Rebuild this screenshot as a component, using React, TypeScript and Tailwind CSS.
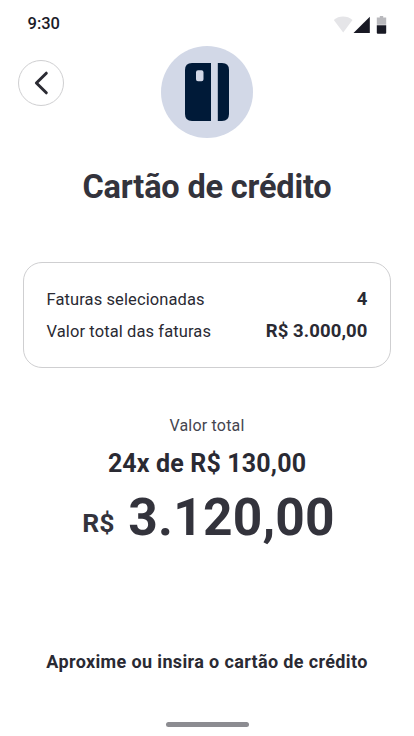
function StatusBar() {
  return (
    <div className="flex h-[46px] items-center justify-between pt-[3px] pr-[27px] pl-[27.5px]">
      <span className="text-[16.5px] font-medium text-[#1b1b28]">9:30</span>
      {/* wifi, signal, battery */}
      <svg width="54" height="20" viewBox="0 0 54 20" className="block">
        <path d="M0.8 5C5.8 0.4 14.3 0.4 19.5 5L10.2 17.6Z" fill="#e5e5e8" />
        <path d="M20.5 18L36.8 1.8V18Z" fill="#181924" />
        <path d="M46.8 1H50.2V2.5H53.2V9.8H43.8V2.5H46.8Z" fill="#b9b9bd" />
        <path d="M43.8 10.2H53.2V17.8Q53.2 18.8 52.2 18.8H44.8Q43.8 18.8 43.8 17.8Z" fill="#181924" />
      </svg>
    </div>
  );
}

function CardBadge() {
  return (
    <div className="grid size-[92px] place-items-center rounded-full bg-[#d2d8e7]">
      <svg width="44" height="58" viewBox="0 0 44 58" className="block">
        <path
          fillRule="evenodd"
          d="M7 0H26V58H7Q0 58 0 51V7Q0 0 7 0ZM13 7.2Q11 7.2 11 9.2V16.2Q11 18.2 13 18.2H16.5Q18.5 18.2 18.5 16.2V9.2Q18.5 7.2 16.5 7.2Z"
          fill="#001a38"
        />
        <path d="M32.8 0H37Q44 0 44 7V51Q44 58 37 58H32.8Z" fill="#001a38" />
      </svg>
    </div>
  );
}

const SUMMARY = [
  { label: "Faturas selecionadas", value: "4" },
  { label: "Valor total das faturas", value: "R$ 3.000,00" },
];

export default function App() {
  return (
    <main className="flex h-[736px] w-[414px] flex-col overflow-hidden bg-white font-['Roboto',sans-serif] whitespace-nowrap text-[#2a2a33]">
      <StatusBar />

      <header className="grid h-[92px] grid-cols-[143px_92px_1fr] pl-[18px]">
        <button
          type="button"
          aria-label="Voltar"
          className="mt-[14px] grid size-[46px] place-items-center rounded-full border border-[#cfcfd1]"
        >
          <svg width="16" height="24" viewBox="0 0 16 24" fill="none" className="block">
            <path
              d="M13.3 2.2L3.4 12L13.3 21.8"
              stroke="#2b2b33"
              strokeWidth="3"
              strokeLinecap="round"
              strokeLinejoin="round"
            />
          </svg>
        </button>
        <CardBadge />
      </header>

      <h1 className="mt-[29px] text-center text-[32.5px] leading-10 font-bold tracking-[-0.18px] text-[#33333c]">
        Cartão de crédito
      </h1>

      <section className="mx-[23px] mt-[55px] flex h-[106px] flex-col justify-center rounded-[19px] border border-[#cfcfd1] px-[22.5px]">
        {SUMMARY.map((row) => (
          <div key={row.label} className="flex h-8 items-baseline justify-between leading-8">
            <span className="text-[16.5px] tracking-[0.1px]">{row.label}</span>
            <span className="text-[18.5px] font-bold tracking-[0.1px]">{row.value}</span>
          </div>
        ))}
      </section>

      <section className="mt-[46px] text-center">
        <p className="text-base leading-6 tracking-[0.2px] text-[#454550]">Valor total</p>
        <p className="mt-[10px] text-[25px] leading-8 font-bold tracking-[0.15px]">24x de R$ 130,00</p>
        <p className="flex h-[74px] items-center justify-center gap-[14px] pl-[3px] text-[#33333c]">
          <span className="mt-[11px] text-[26.5px] font-bold">R$</span>
          <span className="mt-0.5 text-[51.5px] font-bold tracking-[0.2px]">3.120,00</span>
        </p>
      </section>

      <p className="mt-[96px] text-center text-[18px] leading-6 font-bold tracking-[0.36px]">
        Aproxime ou insira o cartão de crédito
      </p>

      <div className="mx-auto mt-12 h-[5px] w-[83px] rounded-full bg-[#8c8c91]" />
    </main>
  );
}
